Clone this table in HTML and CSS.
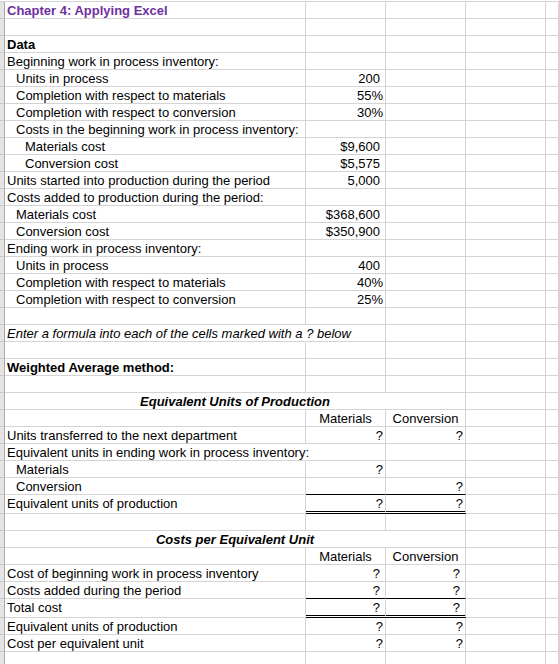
FILE: index.html
```html
<!DOCTYPE html>
<html lang="en">
<head>
<meta charset="utf-8">
<title>Chapter 4: Applying Excel</title>
<link rel="stylesheet" href="styles.css">
</head>
<body>
<div class="sheet">
  <div class="row"><div class="gut"></div><div class="title">Chapter 4: Applying Excel</div><div></div><div></div><div></div><div></div></div>
  <div class="row"><div class="gut"></div><div></div><div></div><div></div><div></div><div></div></div>
  <div class="row"><div class="gut"></div><div class="bold">Data</div><div></div><div></div><div></div><div></div></div>
  <div class="row"><div class="gut"></div><div>Beginning work in process inventory:</div><div></div><div></div><div></div><div></div></div>
  <div class="row"><div class="gut"></div><div class="ind1">Units in process</div><div class="num">200</div><div></div><div></div><div></div></div>
  <div class="row"><div class="gut"></div><div class="ind1">Completion with respect to materials</div><div class="tight">55%</div><div></div><div></div><div></div></div>
  <div class="row"><div class="gut"></div><div class="ind1">Completion with respect to conversion</div><div class="tight">30%</div><div></div><div></div><div></div></div>
  <div class="row"><div class="gut"></div><div class="ind1">Costs in the beginning work in process inventory:</div><div></div><div></div><div></div><div></div></div>
  <div class="row"><div class="gut"></div><div class="ind2">Materials cost</div><div class="num">$9,600</div><div></div><div></div><div></div></div>
  <div class="row"><div class="gut"></div><div class="ind2">Conversion cost</div><div class="num">$5,575</div><div></div><div></div><div></div></div>
  <div class="row"><div class="gut"></div><div>Units started into production during the period</div><div class="num">5,000</div><div></div><div></div><div></div></div>
  <div class="row"><div class="gut"></div><div>Costs added to production during the period:</div><div></div><div></div><div></div><div></div></div>
  <div class="row"><div class="gut"></div><div class="ind1">Materials cost</div><div class="num">$368,600</div><div></div><div></div><div></div></div>
  <div class="row"><div class="gut"></div><div class="ind1">Conversion cost</div><div class="num">$350,900</div><div></div><div></div><div></div></div>
  <div class="row"><div class="gut"></div><div>Ending work in process inventory:</div><div></div><div></div><div></div><div></div></div>
  <div class="row"><div class="gut"></div><div class="ind1">Units in process</div><div class="num">400</div><div></div><div></div><div></div></div>
  <div class="row"><div class="gut"></div><div class="ind1">Completion with respect to materials</div><div class="tight">40%</div><div></div><div></div><div></div></div>
  <div class="row"><div class="gut"></div><div class="ind1">Completion with respect to conversion</div><div class="tight">25%</div><div></div><div></div><div></div></div>
  <div class="row"><div class="gut"></div><div></div><div></div><div></div><div></div><div></div></div>
  <div class="row"><div class="gut"></div><div class="ital spill">Enter a formula into each of the cells marked with a ? below</div><div></div><div></div><div></div><div></div></div>
  <div class="row"><div class="gut"></div><div></div><div></div><div></div><div></div><div></div></div>
  <div class="row"><div class="gut"></div><div class="bold">Weighted Average method:</div><div></div><div></div><div></div><div></div></div>
  <div class="row"><div class="gut"></div><div></div><div></div><div></div><div></div><div></div></div>
  <div class="row"><div class="gut"></div><div class="merged bi">Equivalent Units of Production</div><div></div><div></div></div>
  <div class="row"><div class="gut"></div><div></div><div class="ctr">Materials</div><div class="ctr">Conversion</div><div></div><div></div></div>
  <div class="row"><div class="gut"></div><div>Units transferred to the next department</div><div class="tight">?</div><div class="tight">?</div><div></div><div></div></div>
  <div class="row"><div class="gut"></div><div class="spill">Equivalent units in ending work in process inventory:</div><div></div><div></div><div></div><div></div></div>
  <div class="row"><div class="gut"></div><div class="ind1">Materials</div><div class="tight">?</div><div></div><div></div><div></div></div>
  <div class="row"><div class="gut"></div><div class="ind1">Conversion</div><div class="ul"></div><div class="tight ul">?</div><div></div><div></div></div>
  <div class="row tall"><div class="gut"></div><div>Equivalent units of production</div><div class="tight dbl">?</div><div class="tight dbl">?</div><div></div><div></div></div>
  <div class="row"><div class="gut"></div><div></div><div></div><div></div><div></div><div></div></div>
  <div class="row"><div class="gut"></div><div class="merged bi">Costs per Equivalent Unit</div><div></div><div></div></div>
  <div class="row"><div class="gut"></div><div></div><div class="ctr">Materials</div><div class="ctr">Conversion</div><div></div><div></div></div>
  <div class="row"><div class="gut"></div><div>Cost of beginning work in process inventory</div><div class="num">?</div><div class="num">?</div><div></div><div></div></div>
  <div class="row"><div class="gut"></div><div>Costs added during the period</div><div class="num ul">?</div><div class="num ul">?</div><div></div><div></div></div>
  <div class="row tall"><div class="gut"></div><div>Total cost</div><div class="num dbl">?</div><div class="num dbl">?</div><div></div><div></div></div>
  <div class="row"><div class="gut"></div><div>Equivalent units of production</div><div class="tight">?</div><div class="tight">?</div><div></div><div></div></div>
  <div class="row"><div class="gut"></div><div>Cost per equivalent unit</div><div class="tight">?</div><div class="tight">?</div><div></div><div></div></div>
  <div class="row"><div class="gut"></div><div></div><div></div><div></div><div></div><div></div></div>
</div>
</body>
</html>
```
FILE: styles.css
```css
* {
  box-sizing: border-box;
}

html,
body {
  margin: 0;
  padding: 0;
  background: #fff;
}

body {
  font-family: "Liberation Sans", Arial, sans-serif;
  font-size: 13px;
  color: #000;
}

.sheet {
  margin-top: 1px;
  border-top: 1px solid #d4d4d4;
  width: 559px;
  overflow: hidden;
}

.row {
  display: grid;
  grid-template-columns: 5px 301px 80px 80px 80px 1fr;
  height: 17px;
}

.row.tall {
  height: 19px;
}

.row > div {
  min-width: 0;
  border-right: 1px solid #d4d4d4;
  border-bottom: 1px solid #d4d4d4;
  padding: 1px 2px 0 2px;
  line-height: 15px;
  white-space: nowrap;
}

.row > .gut {
  background: #e4e4e4;
  border-right-color: #a9a9a9;
  border-bottom-color: #c9c9c9;
  padding: 0;
}

.title {
  color: #7030a0;
  font-weight: bold;
}

.bold {
  font-weight: bold;
}

.ital {
  font-style: italic;
}

.bi {
  font-weight: bold;
  font-style: italic;
}

.row > .ind1 {
  padding-left: 11px;
}

.row > .ind2 {
  padding-left: 20px;
}

.row > .num {
  text-align: right;
  padding-right: 5px;
}

.row > .tight {
  text-align: right;
  padding-right: 2px;
}

.ctr {
  text-align: center;
}

.row > .merged {
  grid-column: span 3;
  text-align: center;
}

.row > .spill {
  border-right-color: #fff;
}

.row > .ul {
  border-bottom-color: #000;
}

.row > .dbl {
  border-bottom: 3px double #000;
}
```
